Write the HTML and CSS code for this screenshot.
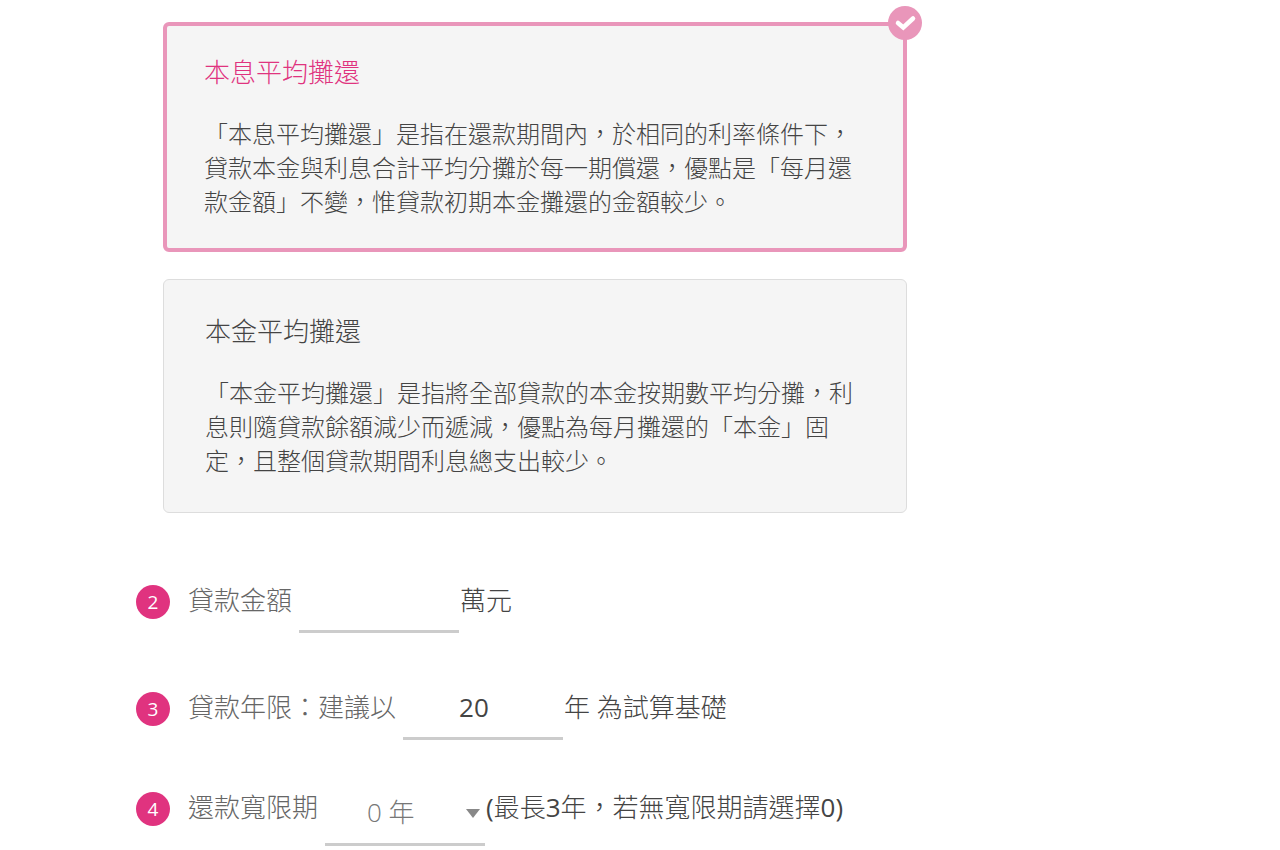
FILE: index.html
```html
<!DOCTYPE html>
<html lang="zh-Hant-TW">
<head>
<meta charset="utf-8">
<meta name="viewport" content="width=device-width, initial-scale=1">
<title>貸款試算</title>
<link rel="stylesheet" href="styles.css">
</head>
<body>
<form class="calculator">
  <div class="options" role="radiogroup" aria-label="還款方式">
    <label class="option">
      <input class="option-input" type="radio" name="method" value="annuity" checked>
      <svg class="option-check" viewBox="0 0 34 34" aria-hidden="true">
        <circle cx="17" cy="17" r="17"/>
        <path d="M10 17L15.300 21.500L25 12.500"/>
      </svg>
      <span class="option-title">本息平均攤還</span>
      <span class="option-text">「本息平均攤還」是指在還款期間內，於相同的利率條件下，貸款本金與利息合計平均分攤於每一期償還，優點是「每月還款金額」不變，惟貸款初期本金攤還的金額較少。</span>
    </label>
    <label class="option">
      <input class="option-input" type="radio" name="method" value="principal">
      <svg class="option-check" viewBox="0 0 34 34" aria-hidden="true">
        <circle cx="17" cy="17" r="17"/>
        <path d="M10 17L15.300 21.500L25 12.500"/>
      </svg>
      <span class="option-title">本金平均攤還</span>
      <span class="option-text">「本金平均攤還」是指將全部貸款的本金按期數平均分攤，利息則隨貸款餘額減少而遞減，優點為每月攤還的「本金」固定，且整個貸款期間利息總支出較少。</span>
    </label>
  </div>

  <div class="step">
    <span class="step-number">2</span>
    <label class="step-label" for="amount">貸款金額</label>
    <input class="field" id="amount" type="text" inputmode="numeric">
    <span class="step-note">萬元</span>
  </div>
  <div class="step">
    <span class="step-number">3</span>
    <label class="step-label" for="years">貸款年限：建議以</label>
    <input class="field" id="years" type="text" inputmode="numeric" value="20">
    <span class="step-note">年 為試算基礎</span>
  </div>
  <div class="step step-last">
    <span class="step-number">4</span>
    <label class="step-label" for="grace">還款寬限期</label>
    <span class="select-wrap">
      <select class="field field-select" id="grace">
        <option>0 年</option>
        <option>1 年</option>
        <option>2 年</option>
        <option>3 年</option>
      </select>
    </span>
    <span class="step-note">(最長3年，若無寬限期請選擇0)</span>
  </div>
</form>
</body>
</html>
```
FILE: styles.css
```css
* {
  box-sizing: border-box;
}

body {
  margin: 0;
  background: #fff;
  color: #444;
  font-family: "Open Sans", "Noto Sans CJK TC", sans-serif;
  font-weight: 300;
}

.calculator {
  max-width: 907px;
  padding: 22px 0 4px 136px;
}

.options {
  display: grid;
  gap: 27px;
  margin: 0 0 60px 27px;
}

.option {
  position: relative;
  display: block;
  padding: 34px 40px 34px 41px;
  border: 1px solid #ddd;
  border-radius: 6px;
  background: #f5f5f5;
  cursor: pointer;
}

.option:has(:checked) {
  padding: 29px 37px;
  border: 4px solid #e996ba;
}

.option-input {
  position: absolute;
  top: 0;
  right: 0;
  margin: 0;
  opacity: 0;
}

.option-check {
  position: absolute;
  top: -20px;
  right: -19px;
  display: none;
  width: 34px;
  height: 34px;
  fill: #e996ba;
}

.option-check path {
  fill: none;
  stroke: #fff;
  stroke-width: 4.5;
  stroke-linecap: round;
}

:checked + .option-check {
  display: block;
}

.option-title,
.option-text {
  display: block;
  line-height: 34px;
}

.option-title {
  margin-bottom: 28px;
  font-size: 26px;
}

:checked ~ .option-title {
  color: #e0337f;
}

.option-text {
  font-size: 24px;
}

.step {
  display: flex;
  align-items: flex-start;
  gap: 1px;
  margin-top: 47px;
  font-size: 26px;
  line-height: 54px;
}

.step-last {
  margin-top: 40px;
}

.step-number {
  flex: none;
  width: 34px;
  height: 34px;
  margin: 12px 17px 0 0;
  border-radius: 50%;
  background: #e0337f;
  color: #fff;
  font-size: 19px;
  font-weight: 400;
  line-height: 34px;
  text-align: center;
}

.step-label {
  margin-right: 6px;
  color: #666;
}

.step-note {
  font-family: "Open Sans", "Noto Sans CJK TC Light", "Noto Sans CJK TC", sans-serif;
  font-weight: 400;
}

.field {
  width: 160px;
  height: 60px;
  padding: 0 8px 4px 56px;
  border: 0;
  border-bottom: 3px solid #ccc;
  border-radius: 0;
  outline: 0;
  background: transparent;
  color: #444;
  font-family: inherit;
  font-size: 26px;
  font-weight: 400;
}

.select-wrap {
  position: relative;
  display: flex;
}

.select-wrap::after {
  content: "";
  position: absolute;
  top: 29px;
  right: 5px;
  border: 7px solid transparent;
  border-top: 9px solid #888;
  border-bottom: 0;
  pointer-events: none;
}

.field-select {
  height: 66px;
  padding: 0 20px 0 42px;
  appearance: none;
  color: #777;
  font-weight: 300;
}
```
